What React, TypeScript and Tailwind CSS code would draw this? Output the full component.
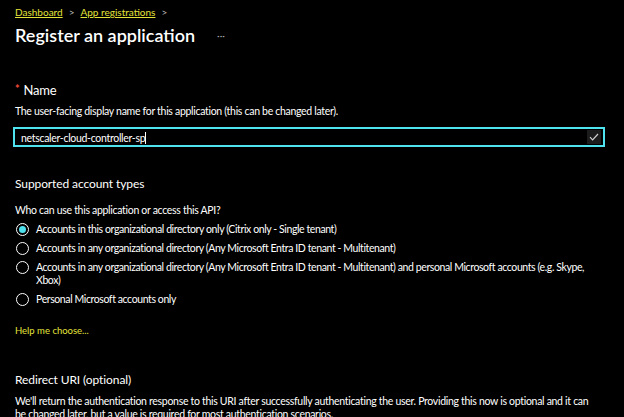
const opcionesCuenta = [
  { id: 'single', etiqueta: 'Accounts in this organizational directory only (Citrix only - Single tenant)', activo: true },
  { id: 'multi', etiqueta: 'Accounts in any organizational directory (Any Microsoft Entra ID tenant - Multitenant)', activo: false },
  {
    id: 'multi-personal',
    etiqueta:
      'Accounts in any organizational directory (Any Microsoft Entra ID tenant - Multitenant) and personal Microsoft accounts (e.g. Skype, Xbox)',
    activo: false,
  },
  { id: 'personal', etiqueta: 'Personal Microsoft accounts only', activo: false },
]

function Radio({ activo }: { activo: boolean }) {
  return (
    <span className="flex h-[13px] w-[13px] shrink-0 items-center justify-center rounded-full border border-white">
      {activo && <span className="h-[7px] w-[7px] rounded-full bg-[#4fe0ee]" />}
    </span>
  )
}

export default function App() {
  return (
    <div
      className="h-[417px] w-[624px] overflow-hidden bg-black text-white"
      style={{ fontFamily: 'Lato, "Noto Sans", sans-serif' }}
    >
      <div className="px-[15px] pt-[4px]">
        <div className="flex items-center gap-[6px] text-[10px] leading-[16px] text-[#e3e33a]">
          <span className="underline">Dashboard</span>
          <span className="text-[#bbbbbb]">&gt;</span>
          <span className="underline">App registrations</span>
          <span className="text-[#bbbbbb]">&gt;</span>
        </div>
        <div className="mt-[3px] flex items-center">
          <h1 className="text-[18px] font-semibold leading-[24px]">Register an application</h1>
          <span className="ml-[22px] text-[10px] leading-none text-[#aaaaaa]">···</span>
        </div>

        <div className="mt-[34px] flex items-center gap-[4px] text-[13px] leading-[18px] tracking-[-0.2px]">
          <span className="-translate-y-[2px] text-[11px] font-bold leading-none text-[#f04a3e]">*</span>
          <span>Name</span>
        </div>
        <p className="mt-[5px] text-[10.5px] leading-[14px] tracking-[-0.3px]">
          The user-facing display name for this application (this can be changed later).
        </p>
        <div className="mt-[9px] -ml-[2px] flex h-[20px] w-[592px] items-center justify-between border-2 border-[#4fe3ef] pl-[6px] pr-[2px]">
          <span className="text-[10.5px] leading-none tracking-[-0.3px]">
            netscaler-cloud-controller-sp<span className="inline-block h-[12px] w-px translate-y-[2px] bg-white" />
          </span>
          <span className="flex h-[14px] w-[14px] items-center justify-center bg-[#1c1c1c]">
            <svg width="10" height="8" viewBox="0 0 10 8" fill="none">
              <path d="M1 4.2 L3.6 6.8 L9 1" stroke="#cfcfcf" strokeWidth="1.2" />
            </svg>
          </span>
        </div>

        <h2 className="mt-[28px] text-[12px] leading-[18px] tracking-[-0.1px]">Supported account types</h2>
        <p className="mt-[10px] text-[10.5px] leading-[14px] tracking-[-0.3px]">
          Who can use this application or access this API?
        </p>
        <div className="mt-[6px] flex flex-col gap-[6px] pl-[1px]">
          {opcionesCuenta.map((opcion) => (
            <label key={opcion.id} className="flex items-start gap-[7px] text-[10.5px] leading-[13px] tracking-[-0.4px]">
              <Radio activo={opcion.activo} />
              <span className="max-w-[560px]">{opcion.etiqueta}</span>
            </label>
          ))}
        </div>

        <p className="mt-[19px] text-[9.5px] leading-[12px] text-[#e3e33a]">Help me choose...</p>

        <h2 className="mt-[34px] text-[12px] leading-[18px] tracking-[-0.1px]">Redirect URI (optional)</h2>
        <p className="mt-[6px] max-w-[575px] text-[10.5px] leading-[13px] tracking-[-0.3px]">
          We'll return the authentication response to this URI after successfully authenticating the user. Providing
          this now is optional and it can be changed later, but a value is required for most authentication scenarios.
        </p>
      </div>
    </div>
  )
}
